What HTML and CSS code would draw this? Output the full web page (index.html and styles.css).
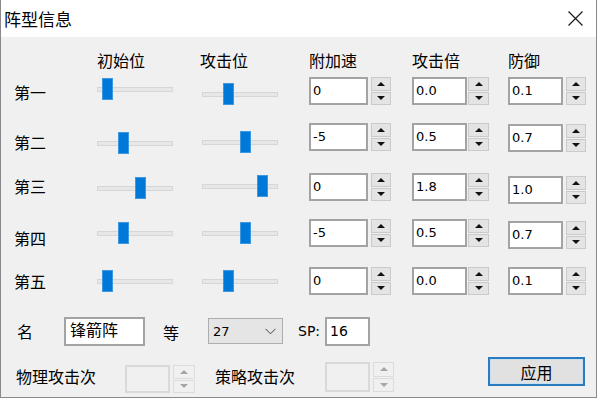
FILE: index.html
```html
<!DOCTYPE html>
<html>
<head>
    <meta charset="utf-8">
    <title>阵型信息</title>
    <link rel="stylesheet" href="styles.css">
</head>
<body>
<div class="window">
    <div class="titlebar">
        <span class="title">阵型信息</span>
        <svg class="close" width="15" height="15" viewBox="0 0 15 15"><path d="M0.5 0.5L14.5 14.5M14.5 0.5L0.5 14.5" stroke="#1a1a1a" stroke-width="1.2" fill="none"/></svg>
    </div>

    <div class="content">
        <div class="grid">
            <!-- header -->
            <div></div>
            <div class="head">初始位</div>
            <div class="head shift">攻击位</div>
            <div class="head">附加速</div>
            <div class="head">攻击倍</div>
            <div class="head">防御</div>

            <div class="row r1">
                <div class="lbl">第一</div>
                <div class="slider s1"><div class="track"></div><div class="thumb" style="left: 5px"></div></div>
                <div class="slider s2"><div class="track"></div><div class="thumb" style="left: 21px"></div></div>
                <div class="spin c1"><div class="box">0</div><div class="btns"><span class="up"></span><span class="dn"></span></div></div>
                <div class="spin c2"><div class="box">0.0</div><div class="btns"><span class="up"></span><span class="dn"></span></div></div>
                <div class="spin c3"><div class="box">0.1</div><div class="btns"><span class="up"></span><span class="dn"></span></div></div>
            </div>

            <div class="row r2">
                <div class="lbl">第二</div>
                <div class="slider s1"><div class="track"></div><div class="thumb" style="left: 21px"></div></div>
                <div class="slider s2"><div class="track"></div><div class="thumb" style="left: 38px"></div></div>
                <div class="spin c1"><div class="box">-5</div><div class="btns"><span class="up"></span><span class="dn"></span></div></div>
                <div class="spin c2"><div class="box">0.5</div><div class="btns"><span class="up"></span><span class="dn"></span></div></div>
                <div class="spin c3"><div class="box">0.7</div><div class="btns"><span class="up"></span><span class="dn"></span></div></div>
            </div>

            <div class="row r3">
                <div class="lbl">第三</div>
                <div class="slider s1"><div class="track"></div><div class="thumb" style="left: 38px"></div></div>
                <div class="slider s2"><div class="track"></div><div class="thumb" style="left: 55px"></div></div>
                <div class="spin c1"><div class="box">0</div><div class="btns"><span class="up"></span><span class="dn"></span></div></div>
                <div class="spin c2"><div class="box">1.8</div><div class="btns"><span class="up"></span><span class="dn"></span></div></div>
                <div class="spin c3"><div class="box">1.0</div><div class="btns"><span class="up"></span><span class="dn"></span></div></div>
            </div>

            <div class="row r4">
                <div class="lbl">第四</div>
                <div class="slider s1"><div class="track"></div><div class="thumb" style="left: 21px"></div></div>
                <div class="slider s2"><div class="track"></div><div class="thumb" style="left: 38px"></div></div>
                <div class="spin c1"><div class="box">-5</div><div class="btns"><span class="up"></span><span class="dn"></span></div></div>
                <div class="spin c2"><div class="box">0.5</div><div class="btns"><span class="up"></span><span class="dn"></span></div></div>
                <div class="spin c3"><div class="box">0.7</div><div class="btns"><span class="up"></span><span class="dn"></span></div></div>
            </div>

            <div class="row r5">
                <div class="lbl">第五</div>
                <div class="slider s1"><div class="track"></div><div class="thumb" style="left: 5px"></div></div>
                <div class="slider s2"><div class="track"></div><div class="thumb" style="left: 21px"></div></div>
                <div class="spin c1"><div class="box">0</div><div class="btns"><span class="up"></span><span class="dn"></span></div></div>
                <div class="spin c2"><div class="box">0.0</div><div class="btns"><span class="up"></span><span class="dn"></span></div></div>
                <div class="spin c3"><div class="box">0.1</div><div class="btns"><span class="up"></span><span class="dn"></span></div></div>
            </div>
        </div>

        <div class="meta">
            <div class="mlbl name-lbl">名</div>
            <div class="text name">锋箭阵</div>
            <div class="mlbl grade-lbl">等</div>
            <div class="combo">
                <span>27</span>
                <svg width="11" height="7" viewBox="0 0 11 7"><path d="M0.5 0.8L5.5 5.8L10.5 0.8" stroke="#444" stroke-width="1" fill="none"/></svg>
            </div>
            <div class="sp-lbl">SP:</div>
            <div class="text sp">16</div>
        </div>

        <div class="meta2">
            <div class="mlbl wide phys">物理攻击次</div>
            <div class="spin off phys-spin"><div class="box"></div><div class="btns"><span class="up"></span><span class="dn"></span></div></div>
            <div class="mlbl wide tact">策略攻击次</div>
            <div class="spin off tact-spin"><div class="box"></div><div class="btns"><span class="up"></span><span class="dn"></span></div></div>
            <button class="apply">应用</button>
        </div>
    </div>
</div>
</body>
</html>
```

FILE: styles.css
```css
html, body {
    margin: 0;
}

body {
    width: 600px;
    height: 404px;
    overflow: hidden;
    background: #fff;
    font-family: "Noto Sans CJK SC", sans-serif;
    color: #000;
}

* {
    box-sizing: border-box;
}

.window {
    width: 597px;
    height: 398px;
    background: #f0f0f0;
    border-left: 1px solid #8a8a8a;
    border-right: 1px solid #8a8a8a;
    border-bottom: 1px solid #8a8a8a;
}

.titlebar {
    height: 37px;
    background: #fff;
    display: flex;
    align-items: center;
    justify-content: space-between;
    padding: 0 13px 0 3px;
}

.title {
    font-size: 17px;
    line-height: 22px;
}

.content {
    padding: 13px 0 0 13px;
}

/* main table */
.grid {
    display: grid;
    grid-template-columns: 83px 105px 107px 103px 96px 1fr;
    grid-template-rows: 27px 46px 50px 46px 48px 50px;
    align-items: start;
}

.row {
    display: contents;
}

.head {
    font-size: 16px;
    line-height: 20px;
}

.head.shift {
    margin-left: -2px;
}

.lbl {
    font-size: 16px;
    line-height: 20px;
}

.r1 .lbl { margin-top: 5px; }
.r2 .lbl { margin-top: 9px; }
.r3 .lbl { margin-top: 3px; }
.r4 .lbl { margin-top: 9px; }
.r5 .lbl { margin-top: 4px; }

.r1 .s1 { margin-top: 1px; }
.r1 .s2 { margin-top: 6px; }
.r2 .s1 { margin-top: 9px; }
.r2 .s2 { margin-top: 8px; }
.r3 .s1 { margin-top: 4px; }
.r3 .s2 { margin-top: 2px; }
.r4 .slider, .r5 .slider { margin-top: 3px; }

.r2 .c3 { margin-top: 1px; }
.r3 .c3 { margin-top: 3px; }
.r4 .c3 { margin-top: 2px; }

/* sliders */
.slider {
    position: relative;
    width: 76px;
    height: 22px;
    display: flex;
    align-items: center;
}

.track {
    width: 76px;
    height: 5px;
    background: #e7e7e7;
    border: 1px solid #d6d6d6;
}

.thumb {
    position: absolute;
    top: 0;
    width: 11px;
    height: 22px;
    background: #0078d7;
    border: 1px solid #3d98e0;
}

/* spin boxes */
.spin {
    display: flex;
    gap: 3px;
}

.box {
    width: 59px;
    height: 28px;
    background: #fff;
    border: 2px solid #a3a3a3;
    font-family: "DejaVu Sans", sans-serif;
    font-size: 13px;
    line-height: 24px;
    padding-left: 2px;
}

.c2 .box, .c3 .box {
    width: 55px;
}

.c2 {
    gap: 1px;
}

.btns {
    width: 20px;
    display: flex;
    flex-direction: column;
    gap: 1px;
}

.c2 .btns {
    width: 21px;
}

.btns span {
    flex: 1;
    background: #e4e4e4;
    border: 1px solid #cacaca;
    display: flex;
    align-items: center;
    justify-content: center;
}

.btns .up::after {
    content: "";
    border-left: 4px solid transparent;
    border-right: 4px solid transparent;
    border-bottom: 4px solid #111;
}

.btns .dn::after {
    content: "";
    border-left: 4px solid transparent;
    border-right: 4px solid transparent;
    border-top: 4px solid #111;
}

.spin.off .box {
    background: #f0f0f0;
    border-color: #d9d9d9;
}

.spin.off .btns span {
    background: #f0f0f0;
    border-color: #dcdcdc;
}

.spin.off .up::after {
    border-bottom-color: #a6a6a6;
}

.spin.off .dn::after {
    border-top-color: #a6a6a6;
}

/* bottom fields */
.meta {
    display: flex;
    align-items: flex-start;
    height: 40px;
}

.mlbl {
    font-size: 16px;
    line-height: 20px;
    width: 16px;
}

.mlbl.wide {
    width: 80px;
}

.name-lbl {
    margin: 4px 0 0 3px;
}

.text {
    height: 29px;
    background: #fff;
    border: 2px solid #a3a3a3;
}

.name {
    width: 81px;
    margin-left: 31px;
    font-size: 16px;
    line-height: 20px;
    padding: 0 4px;
}

.grade-lbl {
    margin: 5px 0 0 18px;
}

.combo {
    width: 75px;
    height: 26px;
    margin: 1px 0 0 29px;
    background: #e5e5e5;
    border: 1px solid #adadad;
    display: flex;
    align-items: center;
    justify-content: space-between;
    padding: 0 6px 0 4px;
    font-family: "DejaVu Sans", sans-serif;
    font-size: 13px;
}

.sp-lbl {
    width: 27px;
    margin: 4px 0 0 15px;
    font-family: "DejaVu Sans", sans-serif;
    font-size: 14px;
    line-height: 20px;
}

.sp {
    width: 45px;
    font-family: "DejaVu Sans", sans-serif;
    font-size: 14px;
    line-height: 25px;
    padding-left: 3px;
}

.meta2 {
    display: flex;
    align-items: flex-start;
}

.meta2 .box {
    width: 45px;
}

.phys {
    margin: 9px 0 0 2px;
}

.phys-spin {
    margin: 8px 0 0 29px;
}

.phys-spin .btns {
    width: 22px;
}

.tact {
    margin: 9px 0 0 20px;
}

.tact-spin {
    margin: 5px 0 0 30px;
}

.tact-spin .box {
    height: 30px;
}

.tact-spin .btns {
    width: 21px;
}

.apply {
    width: 97px;
    height: 29px;
    margin-left: 94px;
    background: #e1e1e1;
    border: 2px solid #2c7bbd;
    box-shadow: inset 0 0 0 1px #c9e0f2;
    font-family: "Noto Sans CJK SC", sans-serif;
    font-size: 16px;
    line-height: 22px;
    padding: 0;
    color: #000;
}
```
